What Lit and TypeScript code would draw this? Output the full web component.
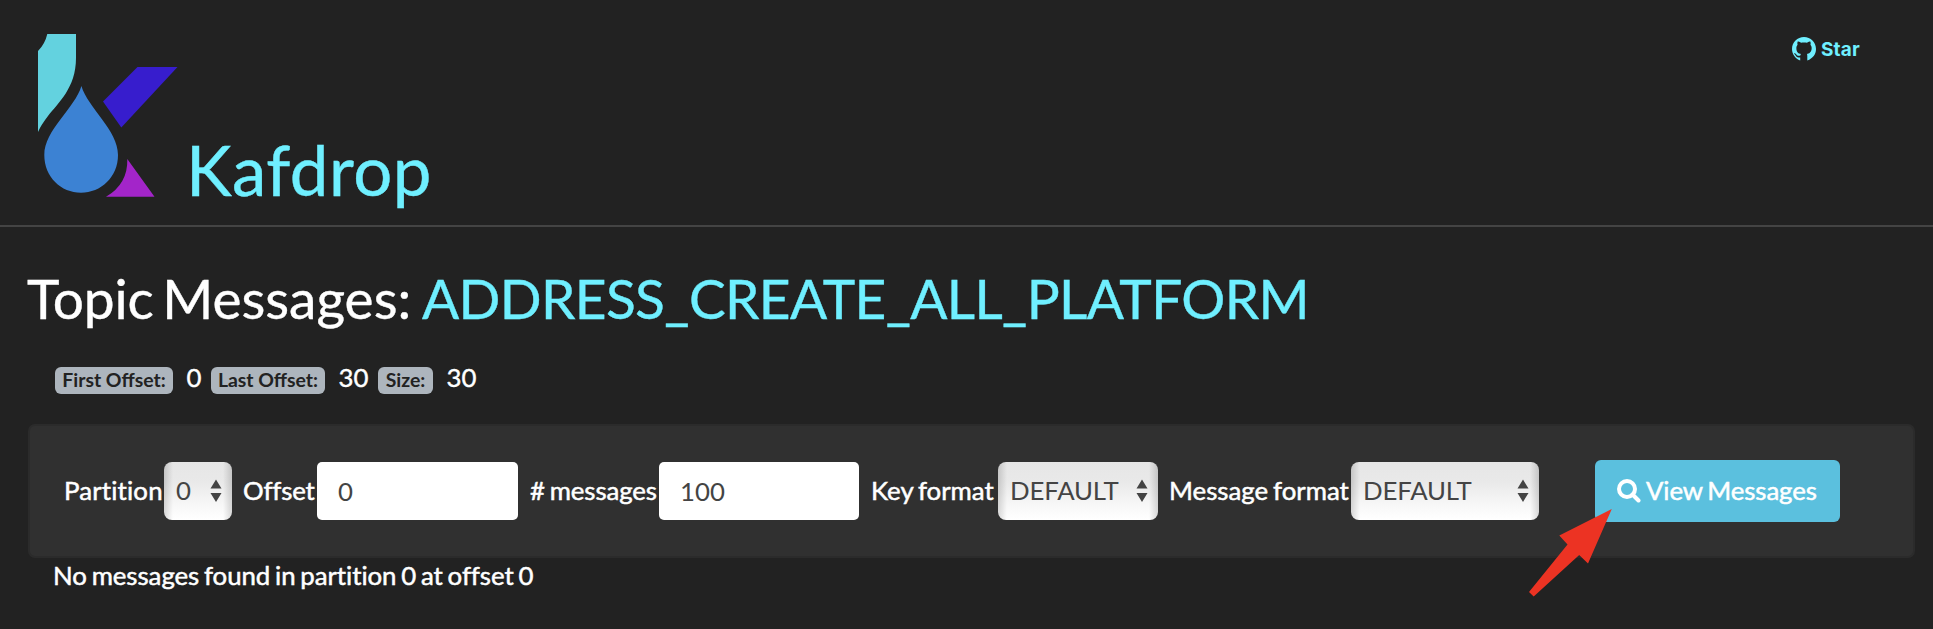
import { LitElement, html, css, svg } from "lit";
import { customElement, property } from "lit/decorators.js";

@customElement("kd-select")
class KdSelect extends LitElement {
  @property() value = "";
  static styles = css`
    :host { display: block; height: 58px; }
    .box {
      box-sizing: border-box; height: 58px; padding: 0 10px 0 12px; border-radius: 8px;
      display: flex; align-items: center; justify-content: space-between;
      background:
        linear-gradient(to right, rgba(0,0,0,.15), transparent 9px, transparent calc(100% - 9px), rgba(0,0,0,.15)),
        linear-gradient(#e6e6e6 0%, #e9e9e9 35%, #f6f6f6 70%, #fff 100%);
      color: #444; white-space: nowrap; letter-spacing: -0.15px;
    }
    .value { font: 25.8px/56px Lato, sans-serif; height: 58px; }
    svg { display: block; width: 12px; height: 24px; fill: #444; }
  `;
  render() {
    return html`<div class="box"><span class="value">${this.value}</span>
      <svg viewBox="0 0 12 24"><path d="M6 .5 11.5 9.5H.5ZM6 23 11.5 14H.5Z" /></svg></div>`;
  }
}

@customElement("app-root")
class AppRoot extends LitElement {
  static styles = css`
    :host {
      display: block; position: relative; box-sizing: border-box; width: 100%; height: 629px;
      overflow: hidden; background: #222; color: #fff;
      font: 25.8px/1.5 Lato, sans-serif; font-variant-ligatures: none;
    }
    .header {
      box-sizing: border-box; height: 227px; border-bottom: 2px solid #444;
      display: flex; justify-content: space-between; padding: 0 73px 0 38px;
      color: #6fefff;
    }
    .brand { display: flex; align-items: flex-start; }
    .logo { width: 140px; height: 164px; margin-top: 33px; display: block; }
    .name { font-size: 69px; line-height: 84px; margin: 128px 0 0 8px; letter-spacing: 0.5px; -webkit-text-stroke: 0.4px currentColor; }
    .star { display: flex; height: 24px; margin-top: 37px; gap: 5px; font: 700 19px/25px Inter, sans-serif; letter-spacing: .2px; }
    .star svg { width: 24px; height: 24px; fill: currentColor; display: block; }
    .title { font-size: 55px; line-height: 66px; font-weight: 400; margin: 38px 0 0 27px; white-space: nowrap; word-spacing: -3.3px; -webkit-text-stroke: 0.4px currentColor; }
    .lead { word-spacing: -5.5px; letter-spacing: -0.1px; }
    .topic { color: #6fefff; letter-spacing: -0.64px; }
    .stats { display: flex; height: 40px; margin: 28px 0 0 55px; }
    .badge {
      box-sizing: border-box; height: 27px; margin-top: 8px; border-radius: 6px; background: #adb5bd;
      color: #222; font: 700 19.4px/26px Lato, sans-serif; text-align: center; white-space: nowrap;
    }
    .b1 { width: 118px; } .b2 { width: 114px; } .b3 { width: 55px; }
    .val { line-height: 37px; padding-left: 13.5px; box-sizing: border-box; -webkit-text-stroke: 0.4px currentColor; }
    .v1 { width: 38px; } .v2 { width: 53px; }
    .panel {
      box-sizing: border-box; width: 1887px; height: 134px; margin: 25px 0 0 28px; padding: 0 0 0 34px;
      background: #303030; border: 2px solid #2b2b2b; border-radius: 7px; display: flex; align-items: center;
    }
    .label { white-space: nowrap; height: 58px; line-height: 56px; box-sizing: border-box; word-spacing: -1.7px; -webkit-text-stroke: 0.5px currentColor; }
    .input {
      box-sizing: border-box; height: 58px; border: 0; border-radius: 5px; padding: 0 21px 0; margin: 0;
      background: #fff; color: #444; font: 25.8px Lato, sans-serif; outline: 0;
    }
    .l1 { width: 100px; letter-spacing: .17px; } .s1 { width: 68px; }
    .l2 { width: 85px; padding-left: 11px; letter-spacing: -.15px; } .i2 { width: 201px; }
    .l3 { width: 141px; padding-left: 12px; letter-spacing: -.1px; } .i3 { width: 200px; }
    .l4 { width: 139px; padding-left: 12px; } .s4 { width: 160px; }
    .l5 { width: 193px; padding-left: 11px; } .s5 { width: 188px; }
    .view {
      box-sizing: border-box; width: 245px; height: 62px; margin: 0 0 0 56px; padding: 0 0 0 22px;
      border: 0; border-radius: 6px; background: #5bc0de; color: #fff; font: 25.8px/60px Lato, sans-serif;
      display: flex; align-items: center; gap: 5px; white-space: nowrap; letter-spacing: -.1px; word-spacing: -1.7px;
      -webkit-text-stroke: 0.5px currentColor;
    }
    .caption { height: 62px; }
    .view svg { width: 24px; height: 24px; fill: none; stroke: #fff; stroke-width: 4; display: block; }
    .msg { margin: 0 0 0 53px; line-height: 35px; letter-spacing: -.05px; word-spacing: -1.75px; -webkit-text-stroke: 0.5px currentColor; }
    .arrow { position: absolute; left: 1529px; top: 509px; width: 84px; height: 88px; fill: #ec3323; }
  `;

  private logo = svg`
    <path fill="#63d2df" d="M9.3 1H38V25C38 55 20 70 10 83Q3 92 0 99V18Q7 11 9.3 1Z" />
    <path fill="#3c82d3" d="M43.4 53C50 75 80 97 80 122C80 144 63 159.700 43 159.700S6.300 144 6.300 122C6.300 97 37 75 43.400 53Z" />
    <path fill="#371dcd" d="M99.500 34H139.500L83.300 94.500 65 68.500Z" />
    <path fill="#a325c9" d="M89.300 126 116.500 163.800H68Q90 151 89.300 126Z" />`;

  render() {
    return html`
      <header class="header">
        <div class="brand">
          <svg class="logo" viewBox="0 0 140 164">${this.logo}</svg>
          <div class="name">Kafdrop</div>
        </div>
        <div class="star">
          <svg viewBox="0 0 16 16"><path d="M8 0C3.580 0 0 3.580 0 8c0 3.540 2.290 6.530 5.470 7.590V13.600c-2.100.4-2.700-.5-2.900-1.050-.15-.35-.5-.95-.85-1.130-.28-.15-.68-.52-.01-.53.63-.01 1.080.58 1.230.82.72 1.210 1.870.87 2.600.66.07-.52.28-.87.51-1.070-1.780-.2-3.140-.89-3.140-3.950 0-.87.31-1.590.82-2.150-.08-.2-.36-1.020.08-2.120 0 0 .67-.21 2.200.82.64-.18 1.320-.27 2-.27s1.360.09 2 .27c1.530-1.040 2.200-.82 2.200-.82.44 1.100.16 1.920.08 2.120.51.56.82 1.270.82 2.150 0 3.070-1.870 3.750-3.150 3.950.19.25.24.73.24 1.480v2.900C13.900 14.300 16 11.500 16 8c0-4.420-3.580-8-8-8z" /></svg>
          <span>Star</span>
        </div>
      </header>
      <h1 class="title"><span class="lead">Topic </span>Messages: <span class="topic">ADDRESS_CREATE_ALL_PLATFORM</span></h1>
      <div class="stats">
        <span class="badge b1">First Offset:</span><span class="val v1">0</span>
        <span class="badge b2">Last Offset:</span><span class="val v2">30</span>
        <span class="badge b3">Size:</span><span class="val">30</span>
      </div>
      <div class="panel">
        <span class="label l1">Partition</span><kd-select class="s1" value="0"></kd-select>
        <span class="label l2">Offset</span><input class="input i2" value="0" />
        <span class="label l3"># messages</span><input class="input i3" value="100" />
        <span class="label l4">Key format</span><kd-select class="s4" value="DEFAULT"></kd-select>
        <span class="label l5">Message format</span><kd-select class="s5" value="DEFAULT"></kd-select>
        <button class="view">
          <svg viewBox="0 0 24 24"><circle cx="10" cy="10" r="8" /><path d="m15.500 15.500 6 6" stroke-linecap="round" /></svg>
          <span class="caption">View Messages</span>
        </button>
      </div>
      <div class="msg">No messages found in partition 0 at offset 0</div>
      <svg class="arrow" viewBox="0 0 84 88"><path d="M82.800 0 59 54.500 50.200 46 4.700 87.500 0 83 38.500 35.500 30.300 26.500Z" /></svg>
    `;
  }
}
